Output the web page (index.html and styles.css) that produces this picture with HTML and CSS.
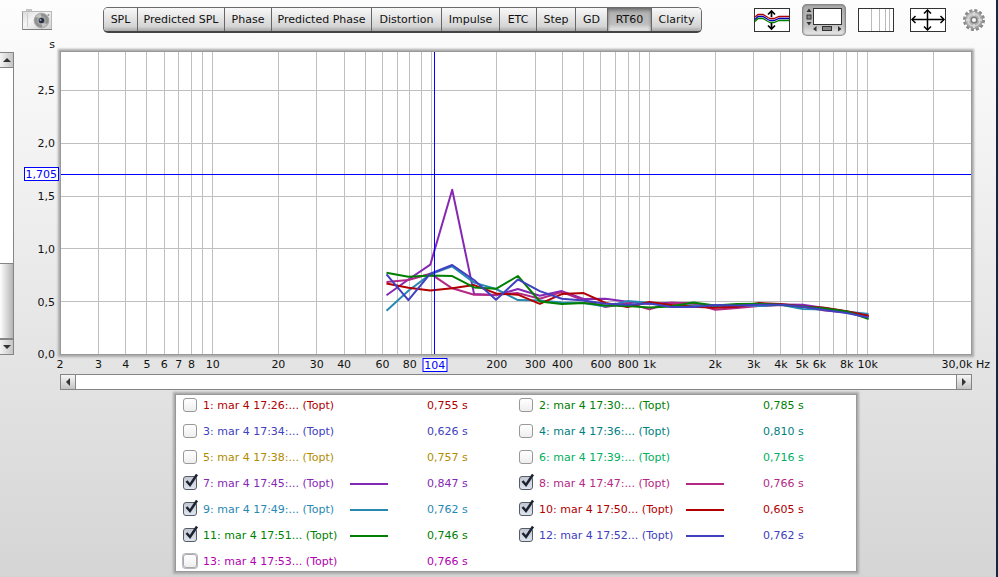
FILE: index.html
```html
<!DOCTYPE html>
<html lang="en">
<head>
<meta charset="utf-8">
<title>RT60</title>
<link rel="stylesheet" href="styles.css">
</head>
<body>
<header class="toolbar">
  <button class="icon-btn camera" type="button" aria-label="Capture graph">
    <svg width="32" height="24" viewBox="0 0 32 24">
      <defs>
        <linearGradient id="cam" x1="0" y1="0" x2="1" y2="1"><stop offset="0" stop-color="#d8d8d8"/><stop offset=".4" stop-color="#f6f6f6"/><stop offset="1" stop-color="#cfcfcf"/></linearGradient>
        <radialGradient id="lens"><stop offset="0" stop-color="#333"/><stop offset=".3" stop-color="#555"/><stop offset=".45" stop-color="#aaa"/><stop offset=".75" stop-color="#8a8a8a"/><stop offset="1" stop-color="#aaa"/></radialGradient>
      </defs>
      <path d="M4.500 3V1.500h2V3M7.500 3V1.500h2V3" stroke="#bbb" fill="#ddd"/>
      <rect x="0" y="3" width="30" height="19" fill="url(#cam)"/>
      <path d="M5.500 5v14" stroke="#ccc" fill="none"/>
      <path d="M0 3.500h30M29.500 3v19" stroke="#b8b8b8" fill="none"/>
      <path d="M0 21.500h30" stroke="#7d7d7d"/><path d="M.5 4v18" stroke="#999"/>
      <circle cx="19.500" cy="12.500" r="7.500" fill="url(#lens)" stroke="#999" stroke-width=".6"/>
      <path d="M13.500 9.500a7 7 0 0 1 5-4l1 4zM25.500 15.500a7 7 0 0 1-5 4l-1-4z" fill="#ddd" opacity=".65"/>
      <circle cx="19.500" cy="12.500" r="2.600" fill="#263242"/><circle cx="18.500" cy="12" r="1" fill="#9aa6b4"/>
      <circle cx="26.500" cy="7" r="1" fill="#999"/>
    </svg>
  </button>
  <nav class="tabs" aria-label="Graphs">
    <button type="button">SPL</button><button type="button">Predicted SPL</button><button type="button">Phase</button><button type="button">Predicted Phase</button><button type="button">Distortion</button><button type="button">Impulse</button><button type="button">ETC</button><button type="button">Step</button><button type="button">GD</button><button type="button" class="active" aria-pressed="true">RT60</button><button type="button">Clarity</button>
  </nav>
  <div class="tools">
    <button class="icon-btn" type="button" aria-label="Separate traces">
      <svg width="36" height="24" viewBox="0 0 36 24">
        <rect x=".5" y=".5" width="35" height="23" fill="#fff" stroke="#333"/>
        <path d="M1 9 4 6.500H9L14 9.500 16 10.500H20L25 8.500H35" fill="none" stroke="#b00000" stroke-width="1.300"/>
        <path d="M1 11.500 4 8.500H9L14 11.500 16 12.500H20L25 10.500H35" fill="none" stroke="#0000b8" stroke-width="1.300"/>
        <path d="M1 13.500 4 10.500H9L14 13.500 16 14.500H20L25 12.500H35" fill="none" stroke="#008000" stroke-width="1.300"/>
        <path d="M17.500 3v6M17.500 15v6M14 6.500l3.500-3.500 3.500 3.500M14 17.500l3.500 3.500 3.500-3.500" fill="none" stroke="#000" stroke-width="1.700"/>
      </svg>
    </button>
    <button class="icon-btn pressed" type="button" aria-label="Show scrollbars" aria-pressed="true">
      <svg width="40" height="28" viewBox="0 0 40 28">
        <rect x="9.500" y="2.500" width="28" height="16" fill="#fff" stroke="#333"/>
        <path d="M2.500 6h5L5 2.500zM2.500 16h5L5 19.500zM12.500 20v5.500l-3.500-2.500zM34 20v5.500l3.500-2.500z" fill="#333"/>
        <rect x="3" y="9" width="4" height="4" fill="#888" stroke="#333"/>
        <rect x="18.500" y="20.500" width="9" height="4" fill="#888" stroke="#333"/>
      </svg>
    </button>
    <button class="icon-btn wide" type="button" aria-label="Logarithmic frequency axis">
      <svg width="36" height="24" viewBox="0 0 36 24">
        <rect x=".5" y=".5" width="35" height="23" fill="#fff" stroke="#333"/>
        <path d="M13.500 1v22M21.500 1v22M27.500 1v22M31.500 1v22" stroke="#bbb"/>
      </svg>
    </button>
    <button class="icon-btn" type="button" aria-label="Graph limits">
      <svg width="36" height="24" viewBox="0 0 36 24">
        <rect x=".5" y=".5" width="35" height="23" fill="#fff" stroke="#333"/>
        <path d="M17.500 2v20M2 11.500h32" stroke="#000" stroke-width="1.500"/>
        <path d="M14 5.500 17.500 2 21 5.500M14 18.500l3.500 3.500 3.500-3.500M5.500 8 2 11.500 5.500 15M30.500 8l3.500 3.500-3.500 3.500" fill="none" stroke="#000" stroke-width="1.500"/>
      </svg>
    </button>
    <button class="icon-btn wide" type="button" aria-label="Graph controls">
      <svg width="24" height="24" viewBox="0 0 24 24">
        <defs><linearGradient id="steel" x1="0" y1="0" x2="1" y2="1"><stop offset="0" stop-color="#c9c9c9"/><stop offset="1" stop-color="#9a9a9a"/></linearGradient></defs>
        <circle cx="12" cy="12" r="9.500" fill="none" stroke="#8a8a8a" stroke-width="3" stroke-dasharray="3 1.974"/>
        <circle cx="12" cy="12" r="8.500" fill="url(#steel)" stroke="#999"/>
        <circle cx="12" cy="12" r="6" fill="none" stroke="#d2d2d2" stroke-width="1.500"/>
        <path d="M12 4v4M12 16v4M4 12h4M16 12h4" stroke="#dedede" stroke-width="1.500"/>
        <circle cx="12" cy="12" r="2.800" fill="#f8f8f8" stroke="#7e7e7e" stroke-width="1.500"/>
      </svg>
    </button>
  </div>
</header>

<main class="workspace">
  <div class="scroll vertical">
    <button type="button" aria-label="Scroll up"><svg width="8" height="4" viewBox="0 0 8 4"><path d="M0 4h8L4 0z"/></svg></button>
    <div class="track"><div class="thumb"></div></div>
    <button type="button" aria-label="Scroll down"><svg width="8" height="4" viewBox="0 0 8 4"><path d="M0 0h8L4 4z"/></svg></button>
  </div>
  <div class="y-axis" id="y-axis"><span class="unit">s</span></div>
  <div class="plot"><svg id="graph" viewBox="0 0 912 304" preserveAspectRatio="none" role="img" aria-label="RT60 against frequency"></svg></div>
  <div class="x-axis" id="x-axis"><span class="limit">30,0k Hz</span></div>
  <div class="scroll horizontal">
    <button type="button" aria-label="Scroll left"><svg width="4" height="8" viewBox="0 0 4 8"><path d="M4 0v8L0 4z"/></svg></button>
    <div class="track"></div>
    <button type="button" aria-label="Scroll right"><svg width="4" height="8" viewBox="0 0 4 8"><path d="M0 0v8L4 4z"/></svg></button>
  </div>
  <ul class="legend" id="legend"></ul>
</main>
<script src="graph.js"></script>
</body>
</html>
```
FILE: styles.css
```css
* { box-sizing: border-box; }

body {
  margin: 0;
  min-height: 100vh;
  display: flex;
  flex-direction: column;
  border-right: 2px solid #14293b;
  background: linear-gradient(#fdfdfd, #d5d5d5);
  color: #111;
  font: 11px/14px "DejaVu Sans", sans-serif;
}

button { font: inherit; color: inherit; padding: 0; }
svg { display: block; }

.toolbar {
  display: flex;
  align-items: center;
  height: 40px;
  padding: 0 10px 0 22px;
}

.icon-btn { border: 0; background: none; }
.camera { width: 81px; }

.tabs {
  display: grid;
  grid-template-columns: 34px 87px 47px 100px 70px 58px 37px 39px 32px 44px 49px;
  height: 26px;
  border: 1px solid #6a6a6a;
  border-bottom: 2px solid #444;
  border-radius: 5px;
  overflow: hidden;
}
.tabs button {
  border: 0;
  border-right: 1px solid #666;
  background: linear-gradient(#f8f8f8, #e2e2e2 50%, #d4d4d4 80%, #a8a8a8);
}
.tabs button:last-child { border-right: 0; }
.tabs .active {
  background: linear-gradient(#888, #b4b4b4 25%, #bebebe 70%, #eee);
  box-shadow: inset 0 1px 3px #666;
}

.tools {
  display: flex;
  align-items: center;
  gap: 12px;
  margin-left: auto;
}
.pressed {
  padding: 2px;
  border-radius: 5px;
  background: linear-gradient(#aaa, #c4c4c4 70%, #f0f0f0);
  box-shadow: inset 0 0 2px 1px #777;
}
.tools .icon-btn:nth-child(n+4) { margin-left: 4px; }

.workspace {
  flex: 1;
  display: grid;
  grid-template-columns: 14px 46px minmax(0, 1fr) 24px;
  grid-template-rows: minmax(200px, 1fr) 19px 16px auto;
  padding: 11px 0 5px;
}

.scroll { display: flex; border: 1px solid #858585; background: #fff; }
.scroll button {
  display: grid;
  place-items: center;
  border: 0;
}
.scroll path { fill: #333; }
.track { flex: 1; display: flex; }

.vertical { flex-direction: column; margin-top: 1px; border-left: 0; }
.vertical button { height: 15px; background: linear-gradient(90deg, #f4f4f4, #c4c4c4); }
.vertical button:first-child { border-bottom: 1px solid #858585; }
.vertical button:last-child { border-top: 1px solid #858585; }
.vertical .track { align-items: flex-end; }
.thumb {
  flex: 1;
  height: 28%;
  border-top: 1px solid #858585;
  border-bottom: 1px solid #858585;
  background: linear-gradient(90deg, #fff, #b4b4b4);
}

.horizontal { grid-column: 3; }
.horizontal button { width: 15px; background: linear-gradient(#f6f6f6, #c4c4c4); }
.horizontal button:first-child { border-right: 1px solid #858585; }
.horizontal button:last-child { border-left: 1px solid #858585; }

.plot {
  position: relative;
  overflow: hidden;
  border: 1px solid #999;
  background: #fff;
  box-shadow: 0 0 2px 2px #aaa;
}
.plot svg { position: absolute; top: -1px; left: -1px; width: calc(100% + 2px); height: calc(100% + 2px); }
.plot path, .plot polyline { fill: none; vector-effect: non-scaling-stroke; }
.grid { stroke: #bfbfbf; shape-rendering: crispEdges; }
.cursor { stroke: #00f; shape-rendering: crispEdges; }
.trace { stroke-width: 2px; stroke-linejoin: round; }

.y-axis, .x-axis { position: relative; z-index: 1; }
.y-axis span { position: absolute; right: 5px; transform: translateY(-50%); }
.y-axis span:not(.marker) { padding-top: 2px; }
.y-axis .unit { top: -7px; }
.x-axis { grid-column: 3; }
.x-axis span { position: absolute; top: 3px; transform: translateX(-50%); white-space: nowrap; }
.x-axis .limit { right: -18px; transform: none; }
.y-axis .marker, .x-axis .marker {
  padding: 1px 1px 0;
  border: 1px solid #00f;
  background: #fff;
  color: #00f;
  line-height: 11px;
}
.y-axis .marker { right: 1px; }

.legend {
  grid-column: 3;
  justify-self: center;
  display: grid;
  grid-template-columns: repeat(2, 336px);
  grid-auto-rows: 20px;
  row-gap: 6px;
  margin: 4px 0 0;
  padding: 0 1px 0 7px;
  border: 1px solid #999;
  background: #fff;
  box-shadow: 0 0 2px 2px #aaa;
  list-style: none;
}
.legend li {
  display: grid;
  grid-template-columns: 20px 147px 77px auto;
  align-items: center;
}
.legend label, .value { padding-top: 2px; }
.check { position: relative; width: 14px; height: 14px; }
.check input {
  appearance: none;
  display: block;
  width: 14px;
  height: 14px;
  margin: 0;
  border: 1px solid #999;
  border-radius: 3px;
  background: linear-gradient(#fff, #eee);
}
.check input:checked { border-color: #555c66; background: linear-gradient(#c3c8d2, #dfe5ee); }
.check svg { position: absolute; left: 1px; top: -3px; display: none; pointer-events: none; }
.check input:checked + svg { display: block; }
.focused .check input { border-color: #aaa; box-shadow: 0 0 0 1px #b9b7c2; }
.swatch { width: 38px; height: 2px; margin-top: 2px; }
```
FILE: graph.js
```js
const SVG = "http://www.w3.org/2000/svg";
const WIDTH = 912, HEIGHT = 304;
const F_MIN = 2, F_MAX = 30000;
const T_MIN = -0.005, T_MAX = 2.873;

const xRatio = f => Math.log(f / F_MIN) / Math.log(F_MAX / F_MIN);
const yRatio = t => (T_MAX - t) / (T_MAX - T_MIN);

// One value per third octave, from 62.5 Hz upwards.
const measurements = [
  { name: "1: mar 4 17:26:...", rt: "0,755", color: "#b00000" },
  { name: "2: mar 4 17:30:...", rt: "0,785", color: "#008000" },
  { name: "3: mar 4 17:34:...", rt: "0,626", color: "#4040c0" },
  { name: "4: mar 4 17:36:...", rt: "0,810", color: "#008080" },
  { name: "5: mar 4 17:38:...", rt: "0,757", color: "#b08c00" },
  { name: "6: mar 4 17:39:...", rt: "0,716", color: "#00b060" },
  { name: "7: mar 4 17:45:...", rt: "0,847", color: "#8528b4",
    values: [.56, .71, .85, 1.56, .572, .56, .62, .556, .6, .525, .528, .5, .48, .49, .48, .45, .455, .468, .474, .47, .44, .408, .36] },
  { name: "8: mar 4 17:47:...", rt: "0,766", color: "#b42885",
    values: [.686, .705, .765, .626, .566, .566, .581, .528, .591, .512, .449, .487, .427, .49, .485, .423, .44, .458, .468, .452, .417, .398, .36] },
  { name: "9: mar 4 17:49:...", rt: "0,762", color: "#2888b4",
    values: [.414, .603, .758, .834, .68, .62, .515, .512, .493, .487, .455, .505, .49, .468, .461, .461, .468, .458, .471, .43, .427, .408, .382] },
  { name: "10: mar 4 17:50...", rt: "0,605", color: "#b00000",
    values: [.673, .632, .607, .626, .657, .578, .566, .48, .572, .581, .487, .449, .496, .468, .452, .442, .452, .487, .477, .455, .442, .41, .366] },
  { name: "11: mar 4 17:51...", rt: "0,746", color: "#008000",
    values: [.774, .736, .749, .742, .635, .622, .743, .502, .477, .487, .464, .46, .445, .455, .493, .464, .477, .48, .471, .452, .436, .408, .335] },
  { name: "12: mar 4 17:52...", rt: "0,762", color: "#4040c0",
    values: [.758, .515, .765, .847, .705, .518, .711, .6, .528, .512, .48, .471, .483, .449, .449, .468, .464, .471, .471, .452, .42, .392, .351] },
  { name: "13: mar 4 17:53...", rt: "0,766", color: "#b000b0", focused: true },
];

const graph = document.getElementById("graph");

function draw(tag, attributes) {
  const node = document.createElementNS(SVG, tag);
  for (const [key, value] of Object.entries(attributes)) node.setAttribute(key, value);
  graph.append(node);
}

function label(axis, text, side, ratio, className = "") {
  const span = document.createElement("span");
  span.textContent = text;
  span.className = className;
  span.style[side] = `${ratio * 100}%`;
  document.getElementById(axis).append(span);
}

const column = f => `M${Math.floor(xRatio(f) * WIDTH) + 0.5} 0V${HEIGHT}`;
const row = t => `M0 ${Math.floor(yRatio(t) * HEIGHT) + 0.5}H${WIDTH}`;

for (let decade = 1; decade <= 10000; decade *= 10) {
  for (let n = 1; n < 10; n++) {
    const f = decade * n;
    if (f > F_MIN && f < F_MAX) draw("path", { class: "grid", d: column(f) });
  }
}
for (let t = 0.5; t < T_MAX; t += 0.5) draw("path", { class: "grid", d: row(t) });

for (const { values, color } of measurements) {
  if (!values) continue;
  const points = values.map((t, i) => {
    const f = 62.5 * 2 ** (i / 3);
    return `${(xRatio(f) * WIDTH).toFixed(1)},${(yRatio(t) * HEIGHT).toFixed(1)}`;
  });
  draw("polyline", { class: "trace", stroke: color, points: points.join(" ") });
}
draw("path", { class: "cursor", d: column(104) + row(1.705) });

for (const t of [0, 0.5, 1, 1.5, 2, 2.5]) {
  label("y-axis", t.toFixed(1).replace(".", ","), "top", yRatio(t));
}
label("y-axis", "1,705", "top", yRatio(1.705), "marker");

for (const f of [2, 3, 4, 5, 6, 7, 8, 10, 20, 30, 40, 60, 80, 200, 300, 400, 600, 800,
  1000, 2000, 3000, 4000, 5000, 6000, 8000, 10000]) {
  label("x-axis", f < 1000 ? f : `${f / 1000}k`, "left", xRatio(f));
}
label("x-axis", "104", "left", xRatio(104), "marker");

document.getElementById("legend").innerHTML = measurements.map((m, i) => `
  <li class="${m.focused ? "focused" : ""}" style="color:${m.color}">
    <span class="check">
      <input type="checkbox" id="m${i}" ${m.values ? "checked" : ""}>
      <svg width="15" height="15" viewBox="0 0 15 15"><path d="M2.500 8 6 12 13 1.500" fill="none" stroke="#1c2433" stroke-width="2.500"/></svg>
    </span>
    <label for="m${i}">${m.name} (Topt)</label>
    <span class="swatch" style="background:${m.values ? m.color : "none"}"></span>
    <span class="value">${m.rt} s</span>
  </li>`).join("");
```
